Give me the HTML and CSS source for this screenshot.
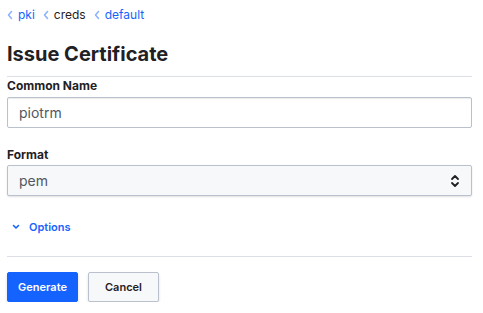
FILE: index.html
```html
<!DOCTYPE html>
<html lang="en">
<head>
  <meta charset="UTF-8" />
  <title>Issue Certificate</title>
  <link rel="stylesheet" href="styles.css">
</head>
<body>
  <div class="page">
    <nav class="breadcrumbs">
      <span class="crumb">
        <svg class="chev" width="6" height="10" viewBox="0 0 6 10"><path d="M4.5 1.5 L1.5 5 L4.5 8.5" fill="none" stroke="#8ab1ff" stroke-width="1.5" stroke-linecap="round" stroke-linejoin="round"/></svg>
        <a href="#">pki</a>
      </span>
      <span class="crumb">
        <svg class="chev" width="6" height="10" viewBox="0 0 6 10"><path d="M4.5 1.5 L1.5 5 L4.5 8.5" fill="none" stroke="#8ab1ff" stroke-width="1.5" stroke-linecap="round" stroke-linejoin="round"/></svg>
        <span class="current">creds</span>
      </span>
      <span class="crumb">
        <svg class="chev" width="6" height="10" viewBox="0 0 6 10"><path d="M4.5 1.5 L1.5 5 L4.5 8.5" fill="none" stroke="#8ab1ff" stroke-width="1.5" stroke-linecap="round" stroke-linejoin="round"/></svg>
        <a href="#">default</a>
      </span>
    </nav>

    <h1 class="title">Issue Certificate</h1>

    <form class="cert-form">
      <div class="field">
        <label for="common-name">Common Name</label>
        <input type="text" id="common-name" value="piotrm" />
      </div>

      <div class="field">
        <label for="format">Format</label>
        <div class="select-wrap">
          <select id="format">
            <option>pem</option>
            <option>der</option>
            <option>pem_bundle</option>
          </select>
          <svg class="select-arrows" width="10" height="14" viewBox="0 0 10 14">
            <path d="M2 5 L5 2 L8 5" fill="none" stroke="#1f2124" stroke-width="1.8" stroke-linecap="round" stroke-linejoin="round"/>
            <path d="M2 9 L5 12 L8 9" fill="none" stroke="#1f2124" stroke-width="1.8" stroke-linecap="round" stroke-linejoin="round"/>
          </svg>
        </div>
      </div>

      <button type="button" class="toggle-options">
        <svg width="8" height="6" viewBox="0 0 8 6">
          <path d="M1.5 1.5 L4 4 L6.5 1.5" fill="none" stroke="#1563ff" stroke-width="1.6" stroke-linecap="round" stroke-linejoin="round"/>
        </svg>
        Options
      </button>

      <div class="actions">
        <button type="submit" class="btn btn-primary">Generate</button>
        <button type="button" class="btn btn-secondary">Cancel</button>
      </div>
    </form>
  </div>
</body>
</html>
```

FILE: styles.css
```css
body {
  margin: 0;
  background: #fff;
  font-family: Inter, "Noto Sans", sans-serif;
  color: #1f2124;
}

.page {
  padding: 0 11px 0 7px;
}

.breadcrumbs {
  display: flex;
  gap: 8px;
  padding-top: 6px;
  font-size: 12px;
  line-height: 18px;
}

.crumb {
  display: flex;
  align-items: center;
  gap: 5px;
}

.breadcrumbs a {
  color: #1563ff;
  text-decoration: none;
}

.current {
  color: #1f2124;
}

.title {
  margin: 0;
  padding: 18px 0 10px;
  font-size: 20px;
  font-weight: 700;
  line-height: 24px;
  border-bottom: 1px solid #dce0e6;
}

.cert-form {
  padding-top: 1px;
}

.field {
  margin-bottom: 19px;
}

.field label {
  display: block;
  font-size: 12px;
  font-weight: 700;
  line-height: 16px;
  margin-bottom: 2px;
}

.field:first-child label {
  margin-bottom: 3px;
}

.field input,
.field select {
  box-sizing: border-box;
  display: block;
  width: 100%;
  height: 31px;
  padding: 0 11px;
  font-family: inherit;
  font-size: 14px;
  color: #525761;
  border: 1px solid #bac1cc;
  border-radius: 2px;
  box-shadow: inset 0 1px 1px rgba(10, 10, 10, 0.08);
  background: #fff;
}

.select-wrap {
  position: relative;
}

.field select {
  appearance: none;
  background: #f7f8fa;
  box-shadow: 0 1px 2px rgba(10, 10, 10, 0.12);
}

.select-arrows {
  position: absolute;
  right: 12px;
  top: 9px;
  pointer-events: none;
}

.toggle-options {
  display: flex;
  align-items: center;
  gap: 9px;
  margin: 0;
  padding: 5px 5px 22px;
  background: none;
  border: none;
  font-family: inherit;
  font-size: 11px;
  font-weight: 600;
  line-height: 14px;
  color: #1563ff;
  cursor: pointer;
}

.actions {
  display: flex;
  gap: 10px;
  border-top: 1px solid #dce0e6;
  padding-top: 15px;
}

.btn {
  width: 71px;
  height: 30px;
  padding: 0;
  font-family: inherit;
  font-size: 11px;
  font-weight: 600;
  border-radius: 2px;
  cursor: pointer;
}

.btn-primary {
  background: #1563ff;
  color: #fff;
  border: 1px solid #1563ff;
  box-shadow: 0 2px 3px rgba(10, 10, 10, 0.15);
}

.btn-secondary {
  background: #f7f8fa;
  color: #1f2124;
  border: 1px solid #bac1cc;
  box-shadow: 0 2px 3px rgba(10, 10, 10, 0.12);
}
```
